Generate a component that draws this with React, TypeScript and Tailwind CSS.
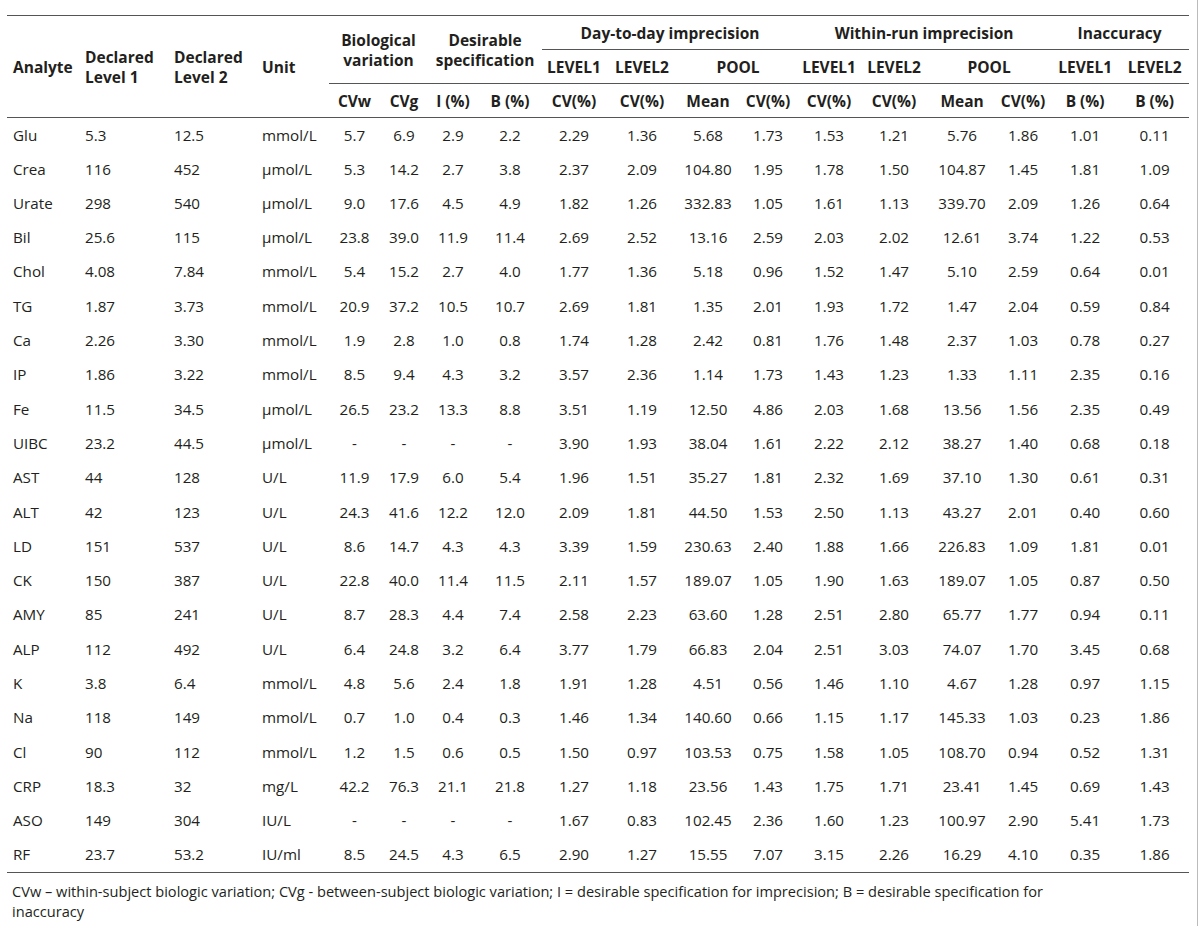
const rows: string[][] = [
  ["Glu", "5.3", "12.5", "mmol/L", "5.7", "6.9", "2.9", "2.2", "2.29", "1.36", "5.68", "1.73", "1.53", "1.21", "5.76", "1.86", "1.01", "0.11"],
  ["Crea", "116", "452", "µmol/L", "5.3", "14.2", "2.7", "3.8", "2.37", "2.09", "104.80", "1.95", "1.78", "1.50", "104.87", "1.45", "1.81", "1.09"],
  ["Urate", "298", "540", "µmol/L", "9.0", "17.6", "4.5", "4.9", "1.82", "1.26", "332.83", "1.05", "1.61", "1.13", "339.70", "2.09", "1.26", "0.64"],
  ["Bil", "25.6", "115", "µmol/L", "23.8", "39.0", "11.9", "11.4", "2.69", "2.52", "13.16", "2.59", "2.03", "2.02", "12.61", "3.74", "1.22", "0.53"],
  ["Chol", "4.08", "7.84", "mmol/L", "5.4", "15.2", "2.7", "4.0", "1.77", "1.36", "5.18", "0.96", "1.52", "1.47", "5.10", "2.59", "0.64", "0.01"],
  ["TG", "1.87", "3.73", "mmol/L", "20.9", "37.2", "10.5", "10.7", "2.69", "1.81", "1.35", "2.01", "1.93", "1.72", "1.47", "2.04", "0.59", "0.84"],
  ["Ca", "2.26", "3.30", "mmol/L", "1.9", "2.8", "1.0", "0.8", "1.74", "1.28", "2.42", "0.81", "1.76", "1.48", "2.37", "1.03", "0.78", "0.27"],
  ["IP", "1.86", "3.22", "mmol/L", "8.5", "9.4", "4.3", "3.2", "3.57", "2.36", "1.14", "1.73", "1.43", "1.23", "1.33", "1.11", "2.35", "0.16"],
  ["Fe", "11.5", "34.5", "µmol/L", "26.5", "23.2", "13.3", "8.8", "3.51", "1.19", "12.50", "4.86", "2.03", "1.68", "13.56", "1.56", "2.35", "0.49"],
  ["UIBC", "23.2", "44.5", "µmol/L", "-", "-", "-", "-", "3.90", "1.93", "38.04", "1.61", "2.22", "2.12", "38.27", "1.40", "0.68", "0.18"],
  ["AST", "44", "128", "U/L", "11.9", "17.9", "6.0", "5.4", "1.96", "1.51", "35.27", "1.81", "2.32", "1.69", "37.10", "1.30", "0.61", "0.31"],
  ["ALT", "42", "123", "U/L", "24.3", "41.6", "12.2", "12.0", "2.09", "1.81", "44.50", "1.53", "2.50", "1.13", "43.27", "2.01", "0.40", "0.60"],
  ["LD", "151", "537", "U/L", "8.6", "14.7", "4.3", "4.3", "3.39", "1.59", "230.63", "2.40", "1.88", "1.66", "226.83", "1.09", "1.81", "0.01"],
  ["CK", "150", "387", "U/L", "22.8", "40.0", "11.4", "11.5", "2.11", "1.57", "189.07", "1.05", "1.90", "1.63", "189.07", "1.05", "0.87", "0.50"],
  ["AMY", "85", "241", "U/L", "8.7", "28.3", "4.4", "7.4", "2.58", "2.23", "63.60", "1.28", "2.51", "2.80", "65.77", "1.77", "0.94", "0.11"],
  ["ALP", "112", "492", "U/L", "6.4", "24.8", "3.2", "6.4", "3.77", "1.79", "66.83", "2.04", "2.51", "3.03", "74.07", "1.70", "3.45", "0.68"],
  ["K", "3.8", "6.4", "mmol/L", "4.8", "5.6", "2.4", "1.8", "1.91", "1.28", "4.51", "0.56", "1.46", "1.10", "4.67", "1.28", "0.97", "1.15"],
  ["Na", "118", "149", "mmol/L", "0.7", "1.0", "0.4", "0.3", "1.46", "1.34", "140.60", "0.66", "1.15", "1.17", "145.33", "1.03", "0.23", "1.86"],
  ["Cl", "90", "112", "mmol/L", "1.2", "1.5", "0.6", "0.5", "1.50", "0.97", "103.53", "0.75", "1.58", "1.05", "108.70", "0.94", "0.52", "1.31"],
  ["CRP", "18.3", "32", "mg/L", "42.2", "76.3", "21.1", "21.8", "1.27", "1.18", "23.56", "1.43", "1.75", "1.71", "23.41", "1.45", "0.69", "1.43"],
  ["ASO", "149", "304", "IU/L", "-", "-", "-", "-", "1.67", "0.83", "102.45", "2.36", "1.60", "1.23", "100.97", "2.90", "5.41", "1.73"],
  ["RF", "23.7", "53.2", "IU/ml", "8.5", "24.5", "4.3", "6.5", "2.90", "1.27", "15.55", "7.07", "3.15", "2.26", "16.29", "4.10", "0.35", "1.86"],
];

const widths = [73, 89, 88, 72, 51, 48, 50, 64, 64, 72, 60, 60, 62, 68, 68, 54, 70, 69];

const line = "border-b border-[#555]";

export default function App() {
  return (
    <div className="flex h-[926px] w-[1200px] bg-white font-['Open_Sans',Arial,sans-serif] text-[#231f20]">
      <div className="w-[1197px] pl-[7px] pt-[15px]">
        <table className="w-[1182px] table-fixed border-collapse border-t border-[#555] text-[15.2px]">
          <colgroup>
            {widths.map((w, i) => (
              <col key={i} style={{ width: w }} />
            ))}
          </colgroup>
          <thead className="text-[15.5px] font-bold leading-[20px]">
            <tr className="h-[34px]">
              <th rowSpan={3} className={`${line} pl-[6px] text-left`}>Analyte</th>
              <th rowSpan={3} className={`${line} pl-[5px] text-left`}>Declared<br />Level 1</th>
              <th rowSpan={3} className={`${line} pl-[5px] text-left`}>Declared<br />Level 2</th>
              <th rowSpan={3} className={`${line} pl-[5px] text-left`}>Unit</th>
              <th rowSpan={2} colSpan={2} className={`${line} text-center`}>Biological<br />variation</th>
              <th rowSpan={2} colSpan={2} className={`${line} text-center`}>Desirable<br />specification</th>
              <th colSpan={4} className={`${line} text-center`}>Day-to-day imprecision</th>
              <th colSpan={4} className={`${line} text-center`}>Within-run imprecision</th>
              <th colSpan={2} className={`${line} text-center`}>Inaccuracy</th>
            </tr>
            <tr className="h-[34px]">
              <th className={`${line} text-center`}>LEVEL1</th>
              <th className={`${line} text-center`}>LEVEL2</th>
              <th colSpan={2} className={`${line} text-center`}>POOL</th>
              <th className={`${line} text-center`}>LEVEL1</th>
              <th className={`${line} text-center`}>LEVEL2</th>
              <th colSpan={2} className={`${line} text-center`}>POOL</th>
              <th className={`${line} text-center`}>LEVEL1</th>
              <th className={`${line} text-center`}>LEVEL2</th>
            </tr>
            <tr className="h-[34px]">
              {["CVw", "CVg", "I (%)", "B (%)", "CV(%)", "CV(%)", "Mean", "CV(%)", "CV(%)", "CV(%)", "Mean", "CV(%)", "B (%)", "B (%)"].map((h, i) => (
                <th key={i} className={`${line} text-center`}>{h}</th>
              ))}
            </tr>
          </thead>
          <tbody>
            {rows.map((r, ri) => (
              <tr key={r[0]} className={`h-[34.3px] ${ri === rows.length - 1 ? line : ""}`}>
                {r.map((v, ci) => (
                  <td
                    key={ci}
                    className={
                      ci === 0
                        ? "pl-[6px] text-left"
                        : ci < 4
                        ? "pl-[5px] text-left"
                        : "text-center"
                    }
                  >
                    {v}
                  </td>
                ))}
              </tr>
            ))}
          </tbody>
        </table>
        <p className="pl-[5px] pt-[8px] text-[14.6px] leading-[20px]">
          CVw – within-subject biologic variation; CVg - between-subject biologic variation; I = desirable specification for imprecision; B = desirable specification for
          <br />
          inaccuracy
        </p>
      </div>
      <div className="w-px bg-[#bbb]" />
    </div>
  );
}
